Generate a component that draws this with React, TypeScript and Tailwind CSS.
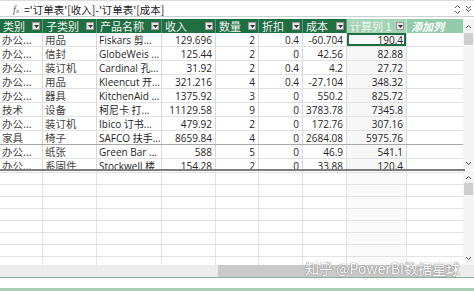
import React from 'react'

const cols = [43, 54, 65, 54, 43, 44, 44, 60, 56]

const headers = ['类别', '子类别', '产品名称', '收入', '数量', '折扣', '成本']

const rows = [
  ['办公...', '用品', 'Fiskars 剪...', '129.696', '2', '0.4', '-60.704', '190.4'],
  ['办公...', '信封', 'GlobeWeis ...', '125.44', '2', '0', '42.56', '82.88'],
  ['办公...', '装订机', 'Cardinal 孔...', '31.92', '2', '0.4', '4.2', '27.72'],
  ['办公...', '用品', 'Kleencut 开...', '321.216', '4', '0.4', '-27.104', '348.32'],
  ['办公...', '器具', 'KitchenAid ...', '1375.92', '3', '0', '550.2', '825.72'],
  ['技术', '设备', '柯尼卡 打...', '11129.58', '9', '0', '3783.78', '7345.8'],
  ['办公...', '装订机', 'Ibico 订书...', '479.92', '2', '0', '172.76', '307.16'],
  ['家具', '椅子', 'SAFCO 扶手...', '8659.84', '4', '0', '2684.08', '5975.76'],
  ['办公...', '纸张', 'Green Bar ...', '588', '5', '0', '46.9', '541.1'],
  ['办公...', '系固件', 'Stockwell 楼', '154.28', '2', '0', '33.88', '120.4'],
]

const cjk = "font-['Noto_Sans_CJK_SC',sans-serif]"
const latin = "font-['Open_Sans','Noto_Sans_CJK_SC',sans-serif]"

function Chevron({ up = false }: { up?: boolean }) {
  return (
    <svg width="7" height="5" viewBox="0 0 7 5">
      <path d={up ? 'M1 4 L3.5 1.5 L6 4' : 'M1 1 L3.5 3.5 L6 1'} fill="none" stroke="#555" strokeWidth="1" />
    </svg>
  )
}

function DropBtn() {
  return (
    <span className="w-[8px] h-[8px] bg-[#e6e6e6] border border-[#9a9a9a] flex items-center justify-center shrink-0">
      <svg width="5" height="3" viewBox="0 0 5 3">
        <path d="M0 0 L5 0 L2.5 3 Z" fill="#333" />
      </svg>
    </span>
  )
}

function HeaderRow() {
  return (
    <div className="flex h-[14px]">
      {headers.map((h, i) => (
        <div
          key={h}
          style={{ width: cols[i] }}
          className="bg-[#1f6f43] border-r border-[#5f9a77] flex items-center justify-between pl-[3px] pr-[2px]"
        >
          <span className={`${cjk} text-[11px] leading-[12px] text-[#f2f2f2]`}>{h}</span>
          <DropBtn />
        </div>
      ))}
      <div
        style={{ width: cols[7] }}
        className="bg-[#a4d4b6] border-r border-[#c8e4d2] flex items-center justify-between pl-[3px] pr-[2px]"
      >
        <span className={`${cjk} text-[11px] leading-[12px] text-[#eef6f1]`}>计算列 1</span>
        <DropBtn />
      </div>
      <div style={{ width: cols[8] }} className="bg-[#93ccaa] flex items-center pl-[4px]">
        <span className={`${cjk} text-[11px] leading-[12px] text-white italic font-bold`}>添加列</span>
      </div>
    </div>
  )
}

function DataRow({ r, idx }: { r: string[]; idx: number }) {
  const bottom = idx === 7 ? 'border-[#a8a8a8]' : 'border-[#e1e1e1]'
  return (
    <div className={`flex h-[14px] border-b ${bottom} box-border`}>
      {r.map((v, i) => {
        const numeric = i >= 3
        const selected = idx === 0 && i === 7
        return (
          <div
            key={i}
            style={{ width: cols[i] }}
            className={`relative border-r border-[#d9d9d9] flex items-center whitespace-nowrap ${
              numeric ? 'justify-end pr-[3px]' : 'pl-[2px]'
            } ${i === 7 ? 'bg-[#f7f7f7]' : ''} ${i < 2 ? cjk : latin} ${i < 2 ? 'text-[10.5px] text-[#444]' : 'text-[10px] text-[#262626]'} leading-[12px]`}
          >
            {v}
            {selected && <span className="absolute inset-0 border-2 border-[#1f6e43]" />}
          </div>
        )
      })}
      <div style={{ width: cols[8] }} className="shrink-0" />
    </div>
  )
}

function EmptyGrid({ heights }: { heights: number[] }) {
  return (
    <div className="w-[463px]">
      {heights.map((h, ri) => (
        <div key={ri} style={{ height: h }} className="flex border-b border-[#e3e3e3] box-border">
          {cols.map((w, i) => (
            <div key={i} style={{ width: w }} className={`${i < 8 ? 'border-r border-[#e3e3e3]' : ''} ${i === 7 ? 'bg-[#fafafa]' : ''}`} />
          ))}
        </div>
      ))}
    </div>
  )
}

export default function App() {
  return (
    <div className={`relative w-[474px] h-[291px] bg-white overflow-hidden ${latin}`}>
      {/* formula bar */}
      <div className="h-[2px] border-t border-[#dcdcdc]" />
      <div className="flex h-[15px] border-b border-[#cfcfcf]">
        <div className="w-[22px] flex items-center justify-end pr-[3px]">
          <span className="font-['Liberation_Serif',serif] italic text-[10px] text-[#555]">
            f<span className="text-[7px]">x</span>
          </span>
        </div>
        <div className={`flex-1 flex items-center pl-[2px] ${cjk} text-[10.5px] text-[#222] leading-[13px]`}>
          ='订单表'[收入]-'订单表'[成本]
        </div>
        <div className="w-[11px] flex flex-col items-center justify-center gap-[1px]">
          <Chevron up />
          <Chevron />
        </div>
        <div className="w-[11px] flex flex-col items-center justify-center -space-y-[2px]">
          <Chevron />
          <Chevron />
        </div>
      </div>
      <div className="h-[2px]" />

      {/* upper pane */}
      <div className="flex h-[150px]">
        <div className="w-[463px] overflow-hidden">
          <HeaderRow />
          {rows.map((r, i) => (
            <DataRow key={i} r={r} idx={i} />
          ))}
        </div>
        <div className="w-[11px] bg-[#f4f4f4] flex flex-col items-center">
          <div className="h-[14px] flex items-center"><Chevron up /></div>
          <div className="w-[9px] h-[12px] bg-[#cfcfcf]" />
          <div className="flex-1" />
          <div className="h-[12px] flex items-center"><Chevron /></div>
        </div>
      </div>

      {/* split divider */}
      <div className="h-[2px] bg-[#7d7d7d] w-[465px]" />

      {/* lower pane */}
      <div className="flex h-[94px]">
        <div className="overflow-hidden">
          <EmptyGrid heights={[2, 12, 12, 12, 12, 12, 12, 12, 12]} />
        </div>
        <div className="w-[11px] bg-[#f4f4f4] flex flex-col items-center">
          <div className="h-[12px] flex items-center"><Chevron up /></div>
          <div className="w-[9px] h-[12px] bg-[#cfcfcf]" />
          <div className="flex-1" />
          <div className="h-[12px] flex items-center mb-[1px]"><Chevron /></div>
        </div>
      </div>

      {/* horizontal scrollbar */}
      <div className="flex h-[12px] bg-[#ececec]">
        <div className="w-[218px]" />
        <div className="w-[238px] bg-[#c9c9c9]" />
      </div>
      <div className="h-[1px] bg-[#8eae99]" />
      <div className="h-[10px]" />
      <div className="h-[3px] bg-[#a9cfb6]" />

      {/* watermark */}
      <div
        className={`absolute left-[305px] top-[261px] ${cjk} text-[14px] leading-none text-white whitespace-nowrap [text-shadow:0_0_1px_#777,0_0_1px_#777]`}
      >
        知乎 @PowerBI数据星球
      </div>
    </div>
  )
}
